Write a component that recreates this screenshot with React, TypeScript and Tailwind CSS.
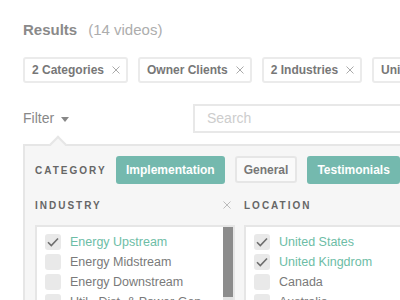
const chips = ['2 Categories', 'Owner Clients', '2 Industries', 'United States']

const industries = [
  { name: 'Energy Upstream', checked: true },
  { name: 'Energy Midstream', checked: false },
  { name: 'Energy Downstream', checked: false },
  { name: 'Util., Dist. & Power Gen', checked: false },
]

const locations = [
  { name: 'United States', checked: true },
  { name: 'United Kingdrom', checked: true },
  { name: 'Canada', checked: false },
  { name: 'Australia', checked: false },
]

const Cross = ({ color }: { color: string }) => (
  <svg width="8" height="8" viewBox="0 0 8 8" className="shrink-0">
    <path d="M0.5 0.5 L7.5 7.5 M7.5 0.5 L0.5 7.5" stroke={color} strokeWidth="1" />
  </svg>
)

const Check = ({ checked }: { checked: boolean }) => (
  <div className="w-[16px] h-[16px] shrink-0 rounded-[3px] bg-[#e9e9e9] flex items-center justify-center">
    {checked && (
      <svg width="12" height="10" viewBox="0 0 12 10">
        <path d="M1 5.2 L4.3 8.5 L11 1.5" fill="none" stroke="#6e6e6e" strokeWidth="1.6" />
      </svg>
    )}
  </div>
)

const CheckList = ({ items }: { items: { name: string; checked: boolean }[] }) => (
  <div className="flex flex-col gap-[4px] pt-[7px] pl-[8px]">
    {items.map((item) => (
      <div key={item.name} className="flex items-center gap-[9px] h-[16px]">
        <Check checked={item.checked} />
        <span
          className={`text-[12.5px] whitespace-nowrap ${
            item.checked ? 'text-[#6dbda6]' : 'text-[#7a7a7a]'
          }`}
        >
          {item.name}
        </span>
      </div>
    ))}
  </div>
)

export default function App() {
  return (
    <div className="w-[400px] h-[300px] overflow-hidden bg-white font-['Liberation_Sans',Arial,sans-serif]">
      <div className="pl-[23px] pt-[20px]">
        <div className="flex items-baseline gap-[11px] text-[15px] leading-[20px]">
          <span className="font-bold text-[#8a8a8a]">Results</span>
          <span className="text-[#adadad]">(14 videos)</span>
        </div>

        <div className="mt-[17px] flex gap-[10px] whitespace-nowrap">
          {chips.map((chip) => (
            <div
              key={chip}
              className="h-[26px] shrink-0 flex items-center gap-[8px] pl-[7px] pr-[6px] border-2 border-[#ebebeb] rounded-[3px]"
            >
              <span className="text-[12px] font-bold text-[#777]">{chip}</span>
              <Cross color="#aaa" />
            </div>
          ))}
        </div>

        <div className="mt-[21px] flex items-center">
          <div className="w-[170px] shrink-0 flex items-center gap-[7px]">
            <span className="text-[14px] text-[#888]">Filter</span>
            <span className="w-0 h-0 border-l-[4px] border-r-[4px] border-t-[5px] border-l-transparent border-r-transparent border-t-[#888] mt-[2px]" />
          </div>
          <div className="w-[230px] shrink-0 h-[29px] border-2 border-[#e8e8e8] flex items-center pl-[12px]">
            <span className="text-[14px] text-[#cdcdcd]">Search</span>
          </div>
        </div>

        <div className="relative mt-[11px] w-[400px] h-[200px] border-2 border-[#e6e6e6] bg-[#f6f6f6] pl-[10px] pt-[10px]">
          <div className="absolute left-[27px] top-[-8px] w-[12px] h-[12px] rotate-45 bg-[#f6f6f6] border-l-2 border-t-2 border-[#e6e6e6]" />

          <div className="relative flex items-center">
            <span className="w-[81px] shrink-0 text-[10px] font-bold tracking-[2px] text-[#666]">CATEGORY</span>
            <div className="flex gap-[10px]">
              <div className="h-[28px] px-[10px] flex items-center rounded-[3px] bg-[#74b9ae] text-white text-[12px] font-bold">
                Implementation
              </div>
              <div className="h-[27px] px-[7px] flex items-center rounded-[3px] border-2 border-[#e6e6e6] bg-[#fafafa] text-[#777] text-[12px] font-bold">
                General
              </div>
              <div className="h-[28px] px-[10px] flex items-center rounded-[3px] bg-[#74b9ae] text-white text-[12px] font-bold">
                Testimonials
              </div>
            </div>
          </div>

          <div className="mt-[15px] flex gap-[9px]">
            <div className="w-[200px] shrink-0">
              <div className="flex items-center justify-between pr-[4px] h-[12px]">
                <span className="text-[10px] font-bold tracking-[2px] text-[#666]">INDUSTRY</span>
                <Cross color="#bbb" />
              </div>
              <div className="mt-[14px] h-[100px] border-2 border-[#e6e6e6] bg-white flex">
                <div className="flex-1 overflow-hidden">
                  <CheckList items={industries} />
                </div>
                <div className="w-[10px] flex flex-col">
                  <div className="h-[70px] bg-[#8c8c8c]" />
                  <div className="flex-1 bg-[#e2e2e2]" />
                </div>
              </div>
            </div>
            <div className="flex-1">
              <div className="flex items-center h-[12px]">
                <span className="text-[10px] font-bold tracking-[2px] text-[#666]">LOCATION</span>
              </div>
              <div className="mt-[14px] h-[100px] border-2 border-[#e6e6e6] bg-white">
                <CheckList items={locations} />
              </div>
            </div>
          </div>
        </div>
      </div>
    </div>
  )
}
